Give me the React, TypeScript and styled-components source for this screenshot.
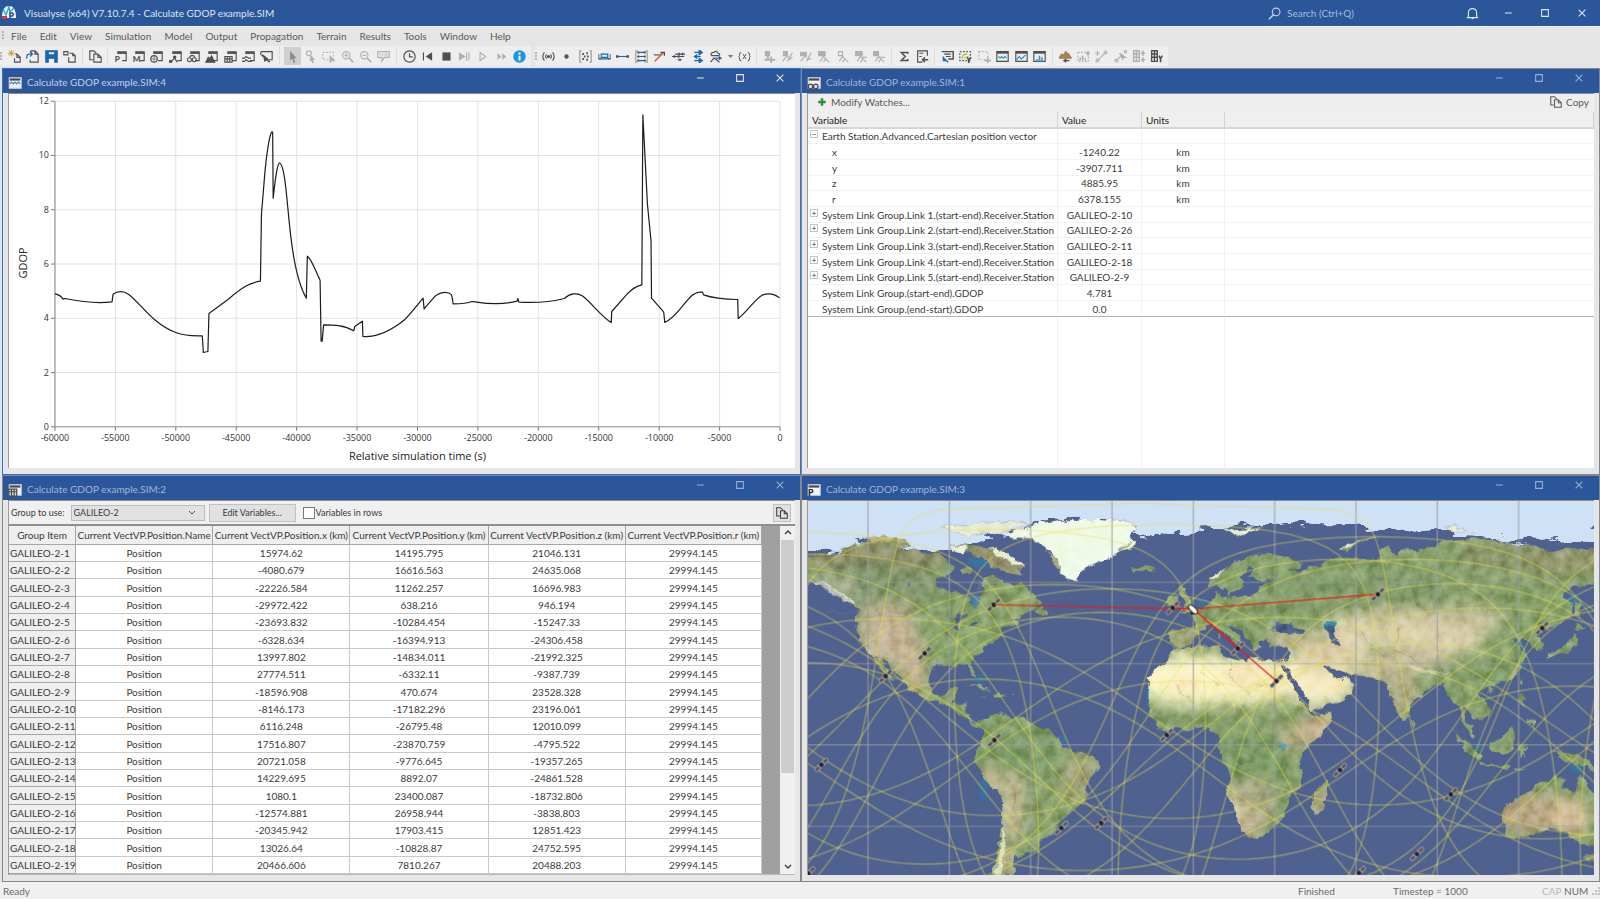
import React, { ReactNode } from 'react';
import styled, { createGlobalStyle, css } from 'styled-components';

const blue = '#2b579a';
const ink = '#505050';
const faded = '#b0b0b0';
const accent = '#1f66b0';

const Global = createGlobalStyle`
  * { box-sizing: border-box; }
  body { margin: 0; background: #e5e5e5; }
  button, select, input { font: inherit; color: inherit; }
`;

const Shell = styled.div`
  display: flex;
  flex-direction: column;
  height: 100vh;
  font: 10px/14px Lato, 'Open Sans', sans-serif;
  color: #3a3a3a;
`;

/* ---------- application frame ---------- */

const AppBar = styled.header`
  display: flex;
  align-items: center;
  flex: none;
  height: 26px;
  padding-left: 2px;
  background: ${blue};
  color: #dfe6f1;
`;

const AppTitle = styled.h1`
  margin: 0 auto 0 8px;
  font-size: 10px;
  font-weight: 400;
  line-height: 14px;
`;

const SearchBox = styled.label`
  display: flex;
  align-items: center;
  gap: 6px;
  width: 187px;
`;

const SearchInput = styled.input`
  width: 120px;
  padding: 0;
  border: 0;
  outline: 0;
  background: transparent;
  &::placeholder { color: #a9bbd8; opacity: 1; }
`;

const ControlButton = styled.button<{ $w: number; $dim?: boolean }>`
  display: grid;
  place-items: center;
  width: ${p => p.$w}px;
  height: 17px;
  padding: 0;
  border: 0;
  background: none;
  color: ${p => (p.$dim ? '#9aaed0' : '#dfe6f1')};
`;

const MenuBar = styled.nav`
  display: flex;
  align-items: center;
  gap: 13px;
  flex: none;
  height: 20px;
  padding: 0 0 2px 2px;
  border-top: 1px solid #f5f5f5;
  background: #e5e5e5;
`;

const MenuItem = styled.button`
  padding: 0;
  border: 0;
  background: none;
  color: #5a5a5a;
`;

const Grip = styled.span<{ $w: number }>`
  width: ${p => p.$w}px;
  height: 9px;
  flex: none;
  background: radial-gradient(circle at 1px 1px, #b4b4b4 1px, transparent 1px) 0 0 / 12px 3px repeat-y;
`;

const MenuGrip = styled(Grip)`
  margin-right: -8px;
`;

const Bars = styled.div`
  display: flex;
  gap: 4px;
  flex: none;
  height: 22px;
  background: #e5e5e5;
`;

const Bar = styled.div`
  display: flex;
  align-items: center;
  height: 20px;
  padding-right: 2px;
  background: #eee;
`;

const Group = styled.div<{ $w: number }>`
  display: grid;
  grid-auto-flow: column;
  grid-auto-columns: 1fr;
  justify-items: center;
  width: ${p => p.$w}px;
`;

const Separator = styled.span`
  width: 1px;
  height: 18px;
  margin: 0 3px;
  background: #dcdcdc;
`;

const ToolButton = styled.button<{ $on?: boolean; $off?: boolean }>`
  display: grid;
  place-items: center;
  width: ${p => (p.$on ? 17 : 18)}px;
  height: 18px;
  padding: 0;
  border: 0;
  background: ${p => (p.$on ? '#cfcfcf' : 'none')};
  color: ${p => (p.$on ? '#8c8c8c' : p.$off ? faded : ink)};
`;

/* ---------- child windows ---------- */

const Desktop = styled.main`
  display: grid;
  flex: 1;
  min-height: 0;
  grid-template: minmax(0, 1fr) minmax(0, 1fr) / minmax(0, 1fr) minmax(0, 1fr);
  padding-left: 2px;
`;

const Frame = styled.section<{ $active?: boolean }>`
  display: flex;
  flex-direction: column;
  min-height: 0;
  border: 1px solid ${p => (p.$active ? '#2a73cf' : '#84888e')};
  background: #e6e6e6;
`;

const FrameBar = styled.div`
  display: flex;
  align-items: center;
  height: 24px;
  flex: none;
  padding-left: 5px;
  background: ${blue};
`;

const FrameTitle = styled.h2<{ $active?: boolean }>`
  margin: 2px auto 0 5px;
  font-size: 10px;
  font-weight: 400;
  line-height: 14px;
  color: ${p => (p.$active ? '#c3d0e6' : '#a3b5d4')};
`;

const FrameIcon = styled.span`
  display: flex;
  margin-top: 3px;
  color: #4a4a4a;
`;

const FrameControls = styled.div`
  display: flex;
  align-self: flex-start;
`;

const FrameBody = styled.div`
  display: flex;
  flex: 1;
  flex-direction: column;
  min-height: 0;
  margin: 0 5px 6px;
  border-top: 1px solid #8d8d8d;
  border-left: 1px solid #9a9a9a;
  background: #fff;
`;

const Plot = styled.svg`
  display: block;
  width: 100%;
  height: 100%;
  min-height: 0;
`;

/* ---------- watch list ---------- */

const WatchBar = styled.div`
  display: flex;
  justify-content: space-between;
  flex: none;
  height: 18px;
  padding: 0 5px 2px 9px;
  background: #eee;
`;

const TextButton = styled.button`
  display: flex;
  align-items: center;
  gap: 4px;
  padding: 0;
  border: 0;
  background: none;
  color: #5a5a5a;
`;

const WatchTable = styled.table`
  flex: 1;
  width: 100%;
  height: 100%;
  min-height: 0;
  border-spacing: 0;
  table-layout: fixed;
  th, td { padding: 0; border-right: 1px solid #f0f0f0; }
  th {
    height: 17px;
    padding-left: 4px;
    border-right: 1px solid #d2d2d2;
    border-bottom: 2px solid #d6d6d6;
    background: #efefef;
    font-weight: 400;
    line-height: 14px;
    text-align: left;
    color: #222;
  }
  td:last-child { border-right: 0; }
`;

const WatchRow = styled.tr<{ $last?: boolean }>`
  height: 15px;
  &:nth-child(3n + 2), &:nth-child(3n) { height: 16px; }
  td { border-bottom: 1px solid ${p => (p.$last ? '#b4b4b4' : '#f2f2f2')}; text-align: center; line-height: 14px; }
  td:first-child { text-align: left; }
`;

const WatchName = styled.span<{ $child?: boolean }>`
  display: flex;
  align-items: center;
  gap: 4px;
  padding-left: ${p => (p.$child ? 24 : 2)}px;
`;

const Toggle = styled.button`
  width: 8px;
  height: 8px;
  margin-bottom: 4px;
  padding: 0;
  border: 1px solid #c4c4c4;
  background: #fff;
  font-size: 8px;
  line-height: 6px;
  color: #333;
`;

const ToggleGap = styled.span`
  width: 8px;
`;

/* ---------- group table ---------- */

const GroupBar = styled.form`
  display: flex;
  align-items: center;
  flex: none;
  height: 23px;
  padding: 0 4px 0 2px;
  background: #f0f0f0;
  font-size: 9px;
`;

const SelectWrap = styled.span`
  display: grid;
  grid-template-columns: 1fr 16px;
  align-items: center;
  width: 134px;
  height: 16px;
  margin: 0 4px 0 6px;
  border: 1px solid #bcbcbc;
  background: #e1e1e1;
`;

const Select = styled.select`
  grid-area: 1 / 1 / 2 / 3;
  height: 14px;
  padding: 0 0 0 2px;
  border: 0;
  appearance: none;
  background: none;
`;

const Chevron = styled.svg`
  grid-area: 1 / 2;
  pointer-events: none;
`;

const PushButton = styled.button<{ $w: number }>`
  display: grid;
  place-items: center;
  width: ${p => p.$w}px;
  height: 18px;
  padding: 0;
  border: 1px solid #c2c2c2;
  background: #e1e1e1;
`;

const CheckLabel = styled.label`
  display: flex;
  align-items: center;
  gap: 1px;
  margin: 0 auto 0 7px;
`;

const Check = styled.input`
  width: 12px;
  height: 12px;
  margin: 0;
  border: 1px solid #777;
  appearance: none;
  background: #fff;
`;

const Scroller = styled.div`
  display: grid;
  flex: 1;
  grid-template: minmax(0, 1fr) / minmax(0, 1fr) 15px;
  min-height: 0;
  overflow: hidden;
  border-top: 2px solid #8f8f8f;
  border-bottom: 1px solid #b9b9b9;
  background: #a0a0a0;
`;

const ScrollTrack = styled.div`
  display: flex;
  flex-direction: column;
  background: #f0f0f0;
`;

const ScrollThumb = styled.div`
  height: 67%;
  margin: 0 1px auto;
  background: #cdcdcd;
`;

const ScrollButton = styled.button`
  display: grid;
  place-items: center;
  height: 14px;
  padding: 0;
  border: 0;
  background: none;
  color: #444;
`;

const line = css`
  border-right: 1px solid #c8c8c8;
  border-bottom: 1px solid #c8c8c8;
`;

const DataTable = styled.table`
  width: calc(100% - 18px);
  border-spacing: 0;
  table-layout: fixed;
  align-self: start;
  th, td { padding: 0; font-weight: 400; line-height: 14px; text-align: center; white-space: nowrap; }
  td { background: #fff; ${line} }
  th { background: #efefef; border-right: 1px solid #a6a6a6; border-bottom: 1px solid #a6a6a6; }
  thead tr { height: 19px; }
  tbody tr { height: 17px; }
  tbody tr:nth-child(3n) { height: 18px; }
  tbody th { padding-left: 1px; text-align: left; }
`;

/* ---------- status bar ---------- */

const StatusBar = styled.footer`
  display: flex;
  align-items: center;
  flex: none;
  height: 17px;
  padding-left: 3px;
  background: #f0f0f0;
  color: #6a6a6a;
`;

const StatusCell = styled.span<{ $w?: number; $off?: boolean }>`
  width: ${p => (p.$w ? p.$w + 'px' : 'auto')};
  margin-right: ${p => (p.$w ? '0' : 'auto')};
  color: ${p => (p.$off ? '#b9b9b9' : 'inherit')};
`;

/* ---------- icons ---------- */

const Svg = ({ size = 13, children }: { size?: number; children: ReactNode }) => (
  <svg width={size} height={size} viewBox="0 0 16 16" fill="none" stroke="currentColor" strokeWidth="1.4" aria-hidden="true">
    {children}
  </svg>
);

const pane = (
  <>
    <path d="M4 4h11v9h-5" />
    <path d="M4 3h11.700" strokeWidth="3" />
  </>
);
const dish = <path d="M4 14l4-6 3 3 4 4M11 11l-3 4" />;

const glyphs: Record<string, ReactNode> = {
  New: <><path d="M9 5h2l4 4v6H8v-5" /><path d="M11 5v4h4" /><path d="M4 0v8M0 4h8M1 1l6 6M7 1L1 7" stroke="#d39433" strokeWidth="1.100" /></>,
  Open: <><path d="M6 4V1h5l4 4v10H5v-3M11 1v4h4" /><path d="M1 11V8q0-3 3-3h3M5 2l3 3-3 3" stroke={accent} /></>,
  Save: <path d="M1 1h14v14h-3v-5H4v5H1zM4 2v4h8V2z" fill={accent} stroke={accent} fillRule="evenodd" />,
  'Save as': <><path d="M1 2h5v4H1zM8 4h4l3 3v8H7V9" /><path d="M12 4v3h3" /></>,
  Copy: <><path d="M5 12H1V1h5l3 3" /><path d="M6 5h5l4 4v6H6zM11 5v4h4" /></>,
  Plan: <>{pane}<text x="1" y="15" fontSize="10" fontWeight="900" fill="currentColor" stroke="none">P</text></>,
  Mercator: <>{pane}<text x="1" y="15" fontSize="10" fontWeight="900" fill="currentColor" stroke="none">M</text></>,
  Globe: <>{pane}<circle cx="5" cy="11" r="4" /><path d="M1 11h8M5 7v8" strokeWidth="0.800" /></>,
  Network: <>{pane}<path d="M2 15l5-5 3 5M7 7v3" /><circle cx="2" cy="14" r="1.400" fill="currentColor" /><circle cx="7" cy="9" r="1.400" fill="currentColor" /></>,
  Watch: <>{pane}<circle cx="3" cy="12" r="2.400" /><circle cx="9" cy="12" r="2.400" /><path d="M3 9l2-2h3l2 2" /></>,
  Terrain: <>{pane}<path d="M1 15l3-6 2 2 2-4 4 8z" fill="currentColor" /></>,
  Table: <>{pane}<path d="M1 8h9v7H1zM1 11h9M4 8v7M7 8v7" /></>,
  Wave: <>{pane}<path d="M0 10h3l2-2 3 2h3M0 14h3l2-2 3 2h4" /></>,
  Tools: <><path d="M1 2h14v10h-4M1 6V2" /><path d="M2 6l10 9M5 8l4 3-3 2z" strokeWidth="2" /></>,
  Select: <path d="M5 1l8 9H9.500l2 5-2 1-2-5.500L5 13z" fill="currentColor" stroke="none" />,
  Pick: <><path d="M8 6l6 6h-3l1 4h-2l-1-3-2 1z" fill="currentColor" stroke="none" /><circle cx="6" cy="4" r="3" /></>,
  Area: <><path d="M1 3h13v9H1z" strokeDasharray="2 2" /><path d="M10 8l5 5h-3l-2 2z" fill="currentColor" /></>,
  'Zoom in': <><circle cx="6.500" cy="6.500" r="4.500" /><path d="M10 10l5 5" strokeWidth="2" /><path d="M4 6.500h5M6.500 4v5" /></>,
  'Zoom out': <><circle cx="6.500" cy="6.500" r="4.500" /><path d="M10 10l5 5" strokeWidth="2" /><path d="M4 6.500h5" /></>,
  Note: <><path d="M1 2h14v7H9l-3 5V9H1z" /><path d="M4 4v3M7 4v3M10 4v3M12 4v3" strokeWidth="1" /></>,
  Clock: <><circle cx="8" cy="8" r="7" /><path d="M8 4v4.500h4" /></>,
  Restart: <path d="M3 3v10M13 4L7 8l6 4z" fill="currentColor" />,
  Stop: <path d="M3 3h10v10H3z" fill="currentColor" stroke="none" />,
  Step: <path d="M2 4l6 4-6 4zM10.500 3v10M13.500 3v10" fill="currentColor" />,
  Play: <path d="M5 3l7 5-7 5z" />,
  Fast: <path d="M3 4l5 4-5 4zM9 4l5 4-5 4z" fill="currentColor" stroke="none" />,
  Information: <><circle cx="8" cy="8" r="7.700" fill="#1c97dd" stroke="none" /><path d="M8 7v6M8 3v2.400" stroke="#fff" strokeWidth="2.400" /></>,
  Signal: <><circle cx="8" cy="8" r="1.200" fill="currentColor" /><path d="M5.500 5.500q-2 2.500 0 5M10.500 5.500q2 2.500 0 5M3 3q-4 5 0 10M13 3q4 5 0 10" /></>,
  Point: <circle cx="8" cy="8" r="2" fill="currentColor" />,
  Cluster: <><path d="M3 1H1v14h2M13 1h2v14h-2" stroke="#9a9a9a" /><path d="M4 5h2M9 4h2M6 8h2M10 8h2M4 11h2M9 12h2" strokeWidth="2.400" /></>,
  Antenna: <><path d="M1 5v6h3M15 5v6h-3" stroke="#777" /><path d="M4 5h8v4H4zM1 11h14" stroke={accent} /></>,
  Link: <><path d="M2 8h12" stroke={accent} /><path d="M0 8h3M13 8h3" strokeWidth="3" /></>,
  'Link group': <><path d="M3 1H1v14h2M13 1h2v14h-2" stroke="#9a9a9a" /><path d="M3 3h10M3 8h10M3 13h10" stroke={accent} /><path d="M3 3h2M11 3h2M3 8h2M11 8h2M3 13h2M11 13h2" strokeWidth="2.600" /></>,
  Interference: <><path d="M1 6h8" /><path d="M2 14l10-10" stroke="#e0452b" strokeWidth="1.700" /><path d="M9 3h5v4" strokeWidth="1.700" /></>,
  Paths: <><path d="M0 8h15M4 5h12M7 12h5" strokeWidth="1.400" /><path d="M2 8h2M8 5h2M7 8h2M12 5h2" strokeWidth="3.200" /><path d="M8 12h3" stroke={accent} strokeWidth="2.500" /></>,
  Flow: <path d="M4 3h6M10 0l4 3-4 3zM4 13h6M10 10l4 3-4 3zM12 8H6M7 6L4 8l3 2z" stroke={accent} fill={accent} />,
  Traffic: <><path d="M3 7q-2-4 3-4 3-3 5 1 4 1 1 3zM2 15l4-5 3 2 4 3" /><path d="M8 10h6M12 8l3 2-3 2" stroke={accent} /></>,
  Variable: <><path d="M4 3q-2 0-2 2t-1 3q1 0 1 3t2 2M12 3q2 0 2 2t1 3q-1 0-1 3t-2 2" strokeWidth="1.200" /><path d="M6 5l4 6M10 5l-4 6" strokeWidth="1.200" /></>,
  'Add link': <><path d="M3 2h5v5H3z" fill="currentColor" /><path d="M6 7v5M2 12h13M10 8v8" strokeWidth="2.200" /></>,
  'Split A': <><path d="M3 2h5v5H3z" fill="currentColor" /><path d="M2 14l5-6 3 1M8 14l6-11M10 12l4-3" /></>,
  'Split B': <><path d="M2 3h7v4H2z" fill="currentColor" /><path d="M2 14l5-6 3 1M9 14l6-11M11 12l4-2" /></>,
  'Station A': <><path d="M2 2h8v5H2z" fill="currentColor" />{dish}</>,
  'Station B': <><path d="M3 2h5v5H3z" />{dish}</>,
  'Station C': <><path d="M2 2h8v5H2z" fill="currentColor" />{dish}<path d="M10 9h6" /></>,
  'Station D': <><path d="M2 2h6v5H2z" fill="currentColor" />{dish}<path d="M8 9h8" /></>,
  Sum: <path d="M12 5V3H4l5 5-5 5h8v-2" strokeWidth="1.800" />,
  Export: <><path d="M14 7V1H2v14h6M4 4h5M4 8h3" /><path d="M15 12H9M11 9l-3 3 3 3" strokeWidth="1.800" /></>,
  Report: <><path d="M1 2h14v9H9" strokeWidth="1.800" /><path d="M4 5h8M6 8h6" /><path d="M3 10l6 5M3 8v5h4" stroke={accent} strokeWidth="1.800" /></>,
  Contours: <><path d="M1 2h13v11H1z" strokeDasharray="2 2" /><path d="M4 11q-1-6 6-6" stroke="#8fbf4c" /><path d="M7 12q-1-4 5-4" stroke="#e8c92e" /><path d="M10 9l2 3 3-3M12 12v4" strokeWidth="2" /></>,
  'Add area': <><path d="M1 2h11v10H1z" strokeDasharray="2 2" /><path d="M8 13h8M12 9v7" strokeWidth="2" /></>,
  Spectrum: <><path d="M1 2h14v12H1z" /><path d="M1 3h14" strokeWidth="3" /><path d="M3 8l2 2 2-2 2 2 2-2 2 2" stroke="#3496d0" /></>,
  Line: <><path d="M1 2h14v12H1z" /><path d="M1 3h14" strokeWidth="3" /><path d="M2 12l3-4 3 3 5-5" stroke="#1d86cc" /></>,
  Histogram: <><path d="M1 2h14v12H1z" /><path d="M1 3h14" strokeWidth="3" /><path d="M5 14v-3M8 14V7M11 14v-5" stroke="#3496d0" strokeWidth="2" /></>,
  'Terrain data': <><path d="M0 10l3-5 3 1 2-4 4 3 3 5z" fill="#a38254" stroke="#a38254" /><path d="M7 13h6M9 11l-3 2 3 2" strokeWidth="1.600" /></>,
  Profile: <><path d="M1 3h10M1 3v11h13V8" strokeDasharray="2 2" /><path d="M4 13V9M7 13V7M10 13v-3M11 4h5M13.500 1v6" strokeWidth="2" /></>,
  'Add path': <><path d="M3 13L13 3M0 4h6M3 1v6" /><circle cx="3" cy="13" r="1.800" /><circle cx="13" cy="3" r="1.800" /></>,
  'Edit path': <><path d="M3 13l6-6" /><circle cx="3" cy="13" r="1.800" /><circle cx="14" cy="2" r="1.500" /><path d="M7 4l7 5h-3v3z" fill="currentColor" /></>,
  'Add clutter': <><path d="M2 1h7v13H2zM2 5h7M2 9h7M5.500 1v13" strokeWidth="1.700" /><path d="M11 4h5M13.500 1v6M11 12h5M13.500 9v6" strokeWidth="2" /></>,
  Clutter: <><path d="M2 1h7v13H2zM2 5h7M2 9h7M5.500 1v13" strokeWidth="1.700" /><path d="M11 7l2 4 2-4M13 10v5" strokeWidth="2" /></>,
};

const Tool = ({ name, on, off }: { name: string; on?: boolean; off?: boolean }) => (
  <ToolButton type="button" aria-label={name} $on={on} $off={off}>
    <Svg>{glyphs[name]}</Svg>
  </ToolButton>
);

const Tools = ({ w, names, off = [] }: { w: number; names: string[]; off?: string[] }) => (
  <Group $w={w}>
    {names.map(n => <Tool key={n} name={n} on={n === 'Select'} off={off.includes(n)} />)}
  </Group>
);

const Controls = ({ w, dim }: { w: number; dim?: boolean }) => (
  <>
    <ControlButton type="button" aria-label="Minimise" $w={w} $dim={dim}><Svg size={12}><path d="M4 8h9" /></Svg></ControlButton>
    <ControlButton type="button" aria-label="Maximise" $w={w} $dim={dim}><Svg size={12}><path d="M3.500 3.500h9v9h-9z" /></Svg></ControlButton>
    <ControlButton type="button" aria-label="Close" $w={w} $dim={dim}><Svg size={12}><path d="M3.500 3.500l9 9M12.500 3.500l-9 9" /></Svg></ControlButton>
  </>
);

const titleGlyphs: Record<string, ReactNode> = {
  chart: <path d="M2 9l2-2 2 2 2-2 2 2 2-2 2 2" stroke="#2c8bc9" />,
  watch: <><circle cx="4" cy="12" r="2.600" fill="#ddd" /><circle cx="10" cy="12" r="2.600" fill="#ddd" /></>,
  table: <><path d="M1 7h9v8H1z" fill="#ddd" /><path d="M1 10h9M4 7v8M7 7v8" /></>,
  map: <text x="1" y="15" fontSize="10" fontWeight="900" fill="#222" stroke="none">P</text>,
};

const ChildWindow = ({ n, icon, active, children }: { n: number; icon: string; active?: boolean; children: ReactNode }) => (
  <Frame $active={active} aria-label={`Calculate GDOP example.SIM:${n}`}>
    <FrameBar>
      <FrameIcon>
        <Svg size={14}>
          <path d="M1.500 2h13.500v12H1.500z" fill="#f2f2f2" stroke="#d8d8d8" />
          <path d="M2 4h12" strokeWidth="2.500" />
          {titleGlyphs[icon]}
        </Svg>
      </FrameIcon>
      <FrameTitle $active={active}>Calculate GDOP example.SIM:{n}</FrameTitle>
      <FrameControls><Controls w={40} dim={!active} /></FrameControls>
    </FrameBar>
    <FrameBody>{children}</FrameBody>
  </Frame>
);

/* ---------- GDOP chart ---------- */

const gdopCurve =
  'M0 578C8 580 12 584 16 594L20 592C42 599 82 608 112 602L114 579C122 569 135 569 144 579C167 604 192 669 237 694C257 706 277 704 289 704L291 754L300 751L302 637L340 594C367 559 382 544 403 540L405 339L412 209C418 119 424 84 427 93L428 291C433 219 437 184 441 185C452 197 455 309 462 399C468 479 477 549 493 591L495 465C504 474 512 514 520 537L522 720L524 720L527 671C547 671 567 671 586 689L588 676L603 660L604 706C637 709 667 679 687 654C702 629 712 609 722 591L724 623L742 591C752 572 770 569 778 581L781 608C797 608 810 606 818 601L824 602C852 609 882 610 906 600L908 592L910 603C937 605 972 603 999 592C1010 576 1024 574 1034 584C1052 604 1070 644 1091 664L1092 631L1122 579C1132 562 1142 554 1151 551L1153 41L1162 309L1169 419L1170 591L1192 629L1194 634L1196 664C1217 649 1232 609 1247 586C1254 576 1264 572 1270 573L1272 581C1287 589 1307 594 1339 595L1340 652C1357 634 1372 594 1387 582C1400 574 1412 579 1421 590';

const px = 46;
const py = 7;
const pw = 726;
const ph = 326;

const Chart = () => (
  <Plot viewBox="0 0 787 374" fontFamily="Open Sans, sans-serif" role="img" aria-label="GDOP against relative simulation time">
    {Array.from({ length: 13 }, (_, i) => {
      const x = px + (pw * i) / 12;
      return (
        <g key={i}>
          <path d={`M${x} ${py}V${py + ph}`} stroke="#e2e2e2" />
          <path d={`M${x} ${py + ph}v4`} stroke="#777" />
          <text x={x} y={py + ph + 14} fontSize="9" textAnchor="middle" fill="#333">{-60000 + 5000 * i}</text>
        </g>
      );
    })}
    {Array.from({ length: 7 }, (_, i) => {
      const y = py + (ph * (6 - i)) / 6;
      return (
        <g key={i}>
          <path d={`M${px} ${y}h${pw}`} stroke={i ? '#e2e2e2' : '#888'} />
          <path d={`M${px - 4} ${y}h4`} stroke="#777" />
          <text x={px - 6} y={y + 3} fontSize="9" textAnchor="end" fill="#333">{2 * i}</text>
        </g>
      );
    })}
    <path d={`M${px} ${py}v${ph}`} stroke="#888" />
    <g transform={`translate(${px} ${py}) scale(${pw / 1422} ${ph / 977})`}>
      <path d={gdopCurve} fill="none" stroke="#1c1c1c" strokeWidth="1.200" strokeLinejoin="round" vectorEffect="non-scaling-stroke" />
    </g>
    <text x={px + pw / 2} y="366" fontSize="11" textAnchor="middle" fill="#222">Relative simulation time (s)</text>
    <text transform="translate(18 169) rotate(-90)" fontSize="11" textAnchor="middle" fill="#222">GDOP</text>
  </Plot>
);

/* ---------- watches ---------- */

type WatchEntry = { name: string; value?: string; units?: string; kind?: 'open' | 'closed' | 'child' };

const linkGroup = 'System Link Group.';
const watches: WatchEntry[] = [
  { name: 'Earth Station.Advanced.Cartesian position vector', kind: 'open' },
  { name: 'x', value: '-1240.22', units: 'km', kind: 'child' },
  { name: 'y', value: '-3907.711', units: 'km', kind: 'child' },
  { name: 'z', value: '4885.95', units: 'km', kind: 'child' },
  { name: 'r', value: '6378.155', units: 'km', kind: 'child' },
  ...[10, 26, 11, 18, 9].map((s, i): WatchEntry => ({
    name: `${linkGroup}Link ${i + 1}.(start-end).Receiver.Station`,
    value: `GALILEO-2-${s}`,
    kind: 'closed',
  })),
  { name: `${linkGroup}(start-end).GDOP`, value: '4.781' },
  { name: `${linkGroup}(end-start).GDOP`, value: '0.0' },
];

const CopyIcon = () => <Svg size={12}>{glyphs.Copy}</Svg>;

const Watches = () => (
  <>
    <WatchBar>
      <TextButton type="button">
        <Svg size={10}><path d="M8 2v12M2 8h12" stroke="#2f8f35" strokeWidth="4" /></Svg>
        Modify Watches...
      </TextButton>
      <TextButton type="button"><CopyIcon />Copy</TextButton>
    </WatchBar>
    <WatchTable>
      <colgroup><col width="250" /><col width="84" /><col width="83" /><col /></colgroup>
      <thead><tr><th>Variable</th><th>Value</th><th>Units</th><th aria-label="Spare" /></tr></thead>
      <tbody>
        {watches.map((w, i) => (
          <WatchRow key={w.name} $last={i === watches.length - 1}>
            <td>
              <WatchName $child={w.kind === 'child'}>
                {w.kind === 'open' && <Toggle type="button" aria-label="Collapse">−</Toggle>}
                {w.kind === 'closed' && <Toggle type="button" aria-label="Expand">+</Toggle>}
                {!w.kind && <ToggleGap />}
                {w.name}
              </WatchName>
            </td>
            <td>{w.value}</td>
            <td>{w.units}</td>
            <td />
          </WatchRow>
        ))}
        <tr><td /><td /><td /><td /></tr>
      </tbody>
    </WatchTable>
  </>
);

/* ---------- group table ---------- */

const positions: [string, string, string][] = [
  ['15974.62', '14195.795', '21046.131'],
  ['-4080.679', '16616.563', '24635.068'],
  ['-22226.584', '11262.257', '16696.983'],
  ['-29972.422', '638.216', '946.194'],
  ['-23693.832', '-10284.454', '-15247.33'],
  ['-6328.634', '-16394.913', '-24306.458'],
  ['13997.802', '-14834.011', '-21992.325'],
  ['27774.511', '-6332.11', '-9387.739'],
  ['-18596.908', '470.674', '23528.328'],
  ['-8146.173', '-17182.296', '23196.061'],
  ['6116.248', '-26795.48', '12010.099'],
  ['17516.807', '-23870.759', '-4795.522'],
  ['20721.058', '-9776.645', '-19357.265'],
  ['14229.695', '8892.07', '-24861.528'],
  ['1080.1', '23400.087', '-18732.806'],
  ['-12574.881', '26958.944', '-3838.803'],
  ['-20345.942', '17903.415', '12851.423'],
  ['13026.64', '-10828.87', '24752.595'],
  ['20466.606', '7810.267', '20488.203'],
];

const GroupTable = () => (
  <>
    <GroupBar>
      <label htmlFor="group">Group to use:</label>
      <SelectWrap>
        <Select id="group" defaultValue="GALILEO-2"><option>GALILEO-2</option></Select>
        <Chevron width="8" height="8" viewBox="0 0 8 8" fill="none" stroke="#555"><path d="M1 2l3 3 3-3" /></Chevron>
      </SelectWrap>
      <PushButton type="button" $w={87}>Edit Variables...</PushButton>
      <CheckLabel><Check type="checkbox" />Variables in rows</CheckLabel>
      <PushButton type="button" aria-label="Copy table" $w={18}><CopyIcon /></PushButton>
    </GroupBar>
    <Scroller>
      <DataTable>
        <colgroup><col width="67" /><col width="137" /><col width="137" /><col width="138" /><col width="137" /><col width="136" /></colgroup>
        <thead>
          <tr>
            <th>Group Item</th>
            <th>Current VectVP.Position.Name</th>
            {['x', 'y', 'z', 'r'].map(a => <th key={a}>Current VectVP.Position.{a} (km)</th>)}
          </tr>
        </thead>
        <tbody>
          {positions.map((p, i) => (
            <tr key={i}>
              <th scope="row">GALILEO-2-{i + 1}</th>
              <td>Position</td>
              {p.map((v, k) => <td key={k}>{v}</td>)}
              <td>29994.145</td>
            </tr>
          ))}
        </tbody>
      </DataTable>
      <ScrollTrack>
        <ScrollButton type="button" aria-label="Scroll up"><svg width="8" height="8" viewBox="0 0 8 8" fill="none" stroke="currentColor" strokeWidth="1.500"><path d="M1 5l3-3 3 3" /></svg></ScrollButton>
        <ScrollThumb />
        <ScrollButton type="button" aria-label="Scroll down"><svg width="8" height="8" viewBox="0 0 8 8" fill="none" stroke="currentColor" strokeWidth="1.500"><path d="M1 2l3 3 3-3" /></svg></ScrollButton>
      </ScrollTrack>
    </Scroller>
  </>
);

/* ---------- world map ---------- */

/* Satellites as [longitude, latitude] in degrees. */
const satellites: [number, number][] = [
  [149.4, 44.6], [-148.4, 55.2], [-99.1, 33.8], [-73.4, 1.8], [-48.7, -30.6], [-3.3, -54.1], [61.1, -47.2],
  [95, -18.2], [-73.6, 51.7], [-7.6, 50.6], [30.7, 23.6], [54.1, -9.2], [82.5, -40.2], [139.8, -56],
  [-164.8, -38.6], [-137.2, -7.3], [-113.5, 25.4], [68.1, 55.6], [128.7, 43.1], [159.4, 13.2], [-178, -20.1],
  [-142, -47.4], [-77.5, -53.4], [-34, -28.8], [-9.8, 3.7], [16.4, 35.6],
];

const mapX = (lon: number) => 3 * (393.3 + 2.711 * lon);
const mapY = (lat: number) => 3 * (275 - 2.711 * lat);
const rad = Math.PI / 180;

/* Horizon circle of a satellite, traced as a path and broken where it wraps. */
const footprint = ([lon0, lat0]: [number, number]) => {
  const rho = Math.acos(6378.155 / 29994.145);
  let d = '';
  let prev = 999;
  for (let b = 0; b <= 360; b += 3) {
    const sinLat = Math.sin(lat0 * rad) * Math.cos(rho) + Math.cos(lat0 * rad) * Math.sin(rho) * Math.cos(b * rad);
    const dLon = Math.atan2(Math.sin(b * rad) * Math.sin(rho) * Math.cos(lat0 * rad), Math.cos(rho) - Math.sin(lat0 * rad) * sinLat) / rad;
    const lon = ((lon0 + dLon + 540) % 360) - 180;
    d += `${Math.abs(lon - prev) > 180 ? 'M' : 'L'}${mapX(lon).toFixed(1)} ${mapY(Math.asin(sinLat) / rad).toFixed(1)}`;
    prev = lon;
  }
  return d;
};

const west = {
  america: 'M0 258L75 254 105 262 130 240 165 224 230 222 300 235 350 240 380 250 410 245 430 262 445 280 470 290 440 310 412 330 412 345 430 362 460 368 490 372 510 380 515 400 530 408 540 395 536 375 555 362 548 345 548 325 575 316 610 330 640 345 660 338 685 362 705 385 727 398 715 415 690 425 660 438 625 455 655 450 660 468 625 468 600 480 612 492 580 510 560 530 545 548 525 562 512 578 525 600 528 620 515 612 503 586 480 582 440 590 410 588 390 605 385 640 395 668 415 678 440 674 450 655 474 652 465 680 455 697 500 700 500 740 525 760 548 752 560 745 575 738 600 728 630 740 660 740 690 755 720 772 745 780 775 805 790 830 820 848 860 850 893 868 895 895 862 935 862 970 850 1000 820 1015 788 1045 770 1080 745 1100 718 1112 718 1130 700 1145 665 1156 640 1160 632 1185 648 1196 640 1216 578 1216 585 1170 595 1130 602 1080 607 1030 606 985 590 960 560 940 545 905 522 872 526 845 545 820 553 795 548 772 525 768 505 755 480 735 455 715 420 700 385 690 340 665 312 640 280 600 262 575 248 572 255 592 272 612 288 635 275 628 245 600 225 565 195 540 175 505 170 470 172 430 180 420 150 400 125 375 100 355 60 340 0 322z',
  islands: 'M470 222L520 225 570 235 600 250 640 272 678 286 655 300 665 316 620 306 575 290 545 262 500 248zM480 295L510 290 520 310 490 312zM702 425L730 405 745 430 730 440zM150 232L200 215 250 205 320 212 340 225 280 235 230 232zM495 638L540 645 575 662 540 655zM578 670L600 665 622 678 590 680zM545 676l14 2-10 3zM635 675l14 2-12 3z',
  european: 'M1140 345L1160 352 1155 370 1172 385 1180 405 1200 420 1145 428 1158 412 1150 395 1135 370zM1100 392L1118 374 1130 380 1126 405 1104 412zM985 290L1005 296 1060 288 1070 295 1045 308 1005 306z',
};

const east = {
  africa: 'M-50 535L0 530 60 525 65 548 110 568 135 578 150 560 195 568 240 574 262 570 258 590 245 585 262 620 282 655 305 692 325 715 340 738 396 730 390 758 365 792 330 825 305 850 300 880 308 920 300 950 270 970 265 1010 245 1040 215 1080 190 1100 140 1105 130 1085 110 1050 98 1000 80 970 92 920 75 870 55 830 60 800 38 792 18 768-30 782-65 775-95 792-130 765-150 735-158 700-150 640-158 630-135 600-105 575-90 550-75 530z',
  eurasia: 'M248 580L262 570 272 545 268 528 230 532 205 530 198 505 215 492 230 478 240 450 285 458 322 484 300 490 250 490 200 502 178 520 185 535 165 540 150 515 130 490 100 462 88 466 118 500 122 512 105 520 80 495 52 475 30 465 0 480-8 505-30 528-62 530-92 518-92 478-15 476-18 450-35 432-15 418 20 405 45 385 50 360 60 375 95 385 150 378 180 365 185 345 222 330 165 333 152 322 170 298 145 292 122 322 130 345 110 362 85 374 70 352 25 348 28 325 80 300 110 275 150 258 200 248 250 260 310 278 295 295 255 295 300 302 330 292 380 275 430 262 480 268 538 262 545 240 565 230 585 262 612 235 650 240 690 230 720 218 780 210 850 200 920 222 1000 228 1050 243 1100 238 1200 236 1200 342 1115 348 1085 378 1122 400 1115 430 1080 462 1030 482 1012 500 1028 518 1030 540 1008 542 985 512 968 500 940 516 958 528 975 560 968 592 935 622 900 645 862 650 838 662 862 700 868 735 835 752 815 735 790 712 795 745 818 775 826 805 805 790 782 745 780 710 755 695 742 668 725 642 700 650 665 672 632 706 630 735 612 758 590 720 572 680 562 648 545 636 522 620 455 616 440 605 415 608 385 585 373 590 398 620 412 630 425 630 440 618 467 645 430 692 380 708 336 722 325 692 300 652 275 616z',
  australia: 'M905 1010L960 985 1010 942 1060 920 1092 930 1088 950 1125 970 1140 912 1162 950 1200 990 1200 1130 1130 1122 1100 1090 1060 1075 1010 1090 940 1108 920 1100 908 1040z',
  islands: 'M382 928L386 950 365 1022 345 1032 334 1010 342 968 358 955zM1132 488L1130 528 1098 548 1045 562 1045 552 1092 532 1118 505zM1122 458L1156 470 1130 482zM1126 378L1142 402 1136 442 1124 428zM755 780L800 818 848 860 836 874 790 830zM835 878L930 888 925 900 840 886zM868 822L900 810 932 768 948 790 935 845 905 855 875 846zM955 822L985 822 965 840 980 865 965 850 955 868zM1060 842L1100 845 1160 866 1190 890 1190 905 1140 888 1090 870zM962 675L975 680 970 700 985 715 965 705zM985 745L1005 755 1000 775 982 760zM632 748L645 765 638 775zM868 650L885 655 870 672zM958 640L968 622 966 645zM415 242L440 220 480 208 540 198 482 218 440 244zM1150 1165L1190 1152 1190 1178zM50 495l8-5 0 18-8 0zM935 900l25-4 30 4-50 4zM80 372l14-6-2 16z',
};

const Land = ({ fill }: { fill: string }) => (
  <>
    <path d={west.america + west.islands + west.european} fill={fill} />
    <path transform="translate(1200 0)" d={east.africa} fill={fill} />
    <path transform="translate(1200 0)" d={east.eurasia + east.australia + east.islands} fill={fill} />
  </>
);

/* Terrain tints: centre x, centre y, radius x, radius y, colour. */
type Tint = [number, number, number, number, string];

const greens: Tint[] = [
  [1350, 890, 110, 90, '#7a9a64'], [650, 860, 130, 80, '#7b9b66'], [480, 520, 90, 60, '#86a26c'], [2080, 600, 90, 50, '#829e69'], [1700, 350, 260, 40, '#7f9a68'],
];

const tints: Tint[] = [
  [200, 255, 260, 40, '#8f8d68'], [240, 340, 200, 60, '#80946a'], [600, 265, 120, 50, '#94906a'],
  [290, 425, 60, 30, '#aca884'], [240, 490, 70, 90, '#c0b294'], [300, 520, 60, 70, '#c6b598'], [340, 610, 40, 60, '#c2b08f'],
  [100, 350, 80, 14, '#c9c9ad'], [640, 1010, 26, 110, '#d2c09f'], [570, 930, 26, 50, '#c9b794'], [615, 1180, 30, 50, '#bdb090'],
  [830, 930, 50, 70, '#9da073'], [850, 890, 40, 40, '#a8a580'],
  [1150, 500, 50, 30, '#aaa77c'], [1180, 630, 170, 78, '#fbf6c8'], [1330, 630, 190, 74, '#fbf4c4'], [1400, 620, 120, 64, '#f6edbf'],
  [1320, 620, 60, 26, '#f6e0b4'], [1150, 645, 40, 20, '#f6e0b4'],
  [1560, 620, 110, 90, '#f6ecc2'], [1560, 780, 50, 50, '#cbb092'], [1480, 800, 40, 40, '#b6ab86'], [1350, 1000, 80, 80, '#a9a882'], [1330, 1060, 50, 50, '#c2b591'], [1290, 1010, 20, 60, '#dccfaa'],
  [1560, 980, 24, 60, '#a8a680'],
  [1480, 510, 90, 24, '#c9bb95'], [1600, 560, 110, 50, '#dacca5'], [1680, 480, 110, 50, '#ddd3b0'], [1750, 590, 60, 40, '#d3c6a0'],
  [1820, 440, 160, 30, '#c3bc95'], [1900, 500, 150, 60, '#ddd1ac'], [1990, 450, 120, 40, '#cbc29e'], [1860, 560, 90, 40, '#c8c0a0'],
  [1810, 670, 50, 70, '#b0ad84'], [1800, 610, 60, 30, '#b5b088'], [2300, 270, 160, 50, '#93966c'], [2080, 250, 120, 40, '#8e976c'],
  [2200, 1030, 110, 60, '#b8a583'], [2310, 1040, 60, 60, '#d3bc98'], [2120, 1020, 40, 40, '#b4a27e'], [1540, 1000, 30, 60, '#a8a47a'],
];

const shoals: [number, number, number, number][] = [
  [545, 275, 45, 16], [540, 628, 22, 12], [785, 810, 18, 10], [2165, 560, 12, 36], [2150, 510, 18, 9], [2035, 830, 10, 14],
  [2330, 895, 22, 14], [2320, 390, 22, 12], [1205, 400, 18, 10], [1048, 680, 7, 36], [552, 950, 10, 44],
];

const iceWest = 'M0 93H1210V180L1170 188 1120 190 1080 186 1040 196 1010 190 990 160 800 150 680 158 620 190 560 200 520 225 450 240 400 255 350 240 230 205 160 228 140 242 0 243z';
const iceEast = 'M0 93H1190V215L1150 212 1110 222 1080 210 1040 212 1000 205 960 218 915 218 900 205 840 200 780 198 720 172 690 172 660 190 610 182 540 176 500 180 450 165 360 166 300 156 200 165 120 168 60 176 0 180z';
const greenland = 'M600 195L640 183 720 160 800 150 900 146 990 155 1012 175 992 200 1012 222 962 250 912 270 870 290 848 300 835 322 825 335 800 326 782 310 770 290 768 262 745 240 722 215 690 205 640 202z';
const borders = 'M24 428H175L420 430 470 450M24 255V330M200 545L260 550 330 610M470 870L500 850M560 870L620 860 640 900 700 960 720 1000M600 960L640 960 650 1040 700 1110';
const bordersEast = 'M95 545L90 620 160 680M240 640H170M225 700L225 790 300 800M90 720L120 690M100 880H190L230 830M225 580V640M60 420L80 450 150 480M200 300L210 380 180 420M360 440L420 405 560 400 620 390 700 420 800 410 860 420 940 410 960 440M600 470L580 540 700 600 760 600M480 480L520 540 560 560M110 985L160 990 200 950M-80 640L-20 700M0 600L60 650';

const Satellite = ({ x, y }: { x: number; y: number }) => (
  <g transform={`translate(${x} ${y}) rotate(-45)`}>
    <rect x="-27" y="-7" width="54" height="14" rx="6" fill="#bdb7b8" opacity="0.8" />
    <rect x="-24" y="-4.500" width="14" height="9" fill="#5d5652" />
    <rect x="10" y="-4.500" width="14" height="9" fill="#5d5652" />
    <circle r="7" fill="#262322" />
  </g>
);

const WorldMap = () => (
  <Plot viewBox="24 93 2358 1122" preserveAspectRatio="xMidYMid slice" role="img" aria-label="World map with satellite positions">
    <defs>
      <filter id="coast" x="0" y="93" width="2400" height="1130" filterUnits="userSpaceOnUse" colorInterpolationFilters="sRGB">
        <feTurbulence type="fractalNoise" baseFrequency="0.035" numOctaves="3" seed="4" result="n" />
        <feDisplacementMap in="SourceGraphic" in2="n" scale="24" xChannelSelector="R" yChannelSelector="G" result="s" />
        <feTurbulence type="fractalNoise" baseFrequency="0.03" numOctaves="5" seed="9" />
        <feColorMatrix values="0.700 0 0 0 0.170  0.700 0 0 0 0.170  0.700 0 0 0 0.170  0 0 0 0 1" result="g" />
        <feBlend in="g" in2="s" mode="soft-light" result="b" />
        <feComposite in="b" in2="s" operator="in" />
      </filter>
      <filter id="ragged" x="0" y="60" width="2400" height="400" filterUnits="userSpaceOnUse">
        <feTurbulence type="fractalNoise" baseFrequency="0.02 0.05" numOctaves="4" seed="2" />
        <feDisplacementMap in="SourceGraphic" scale="50" xChannelSelector="R" yChannelSelector="G" />
      </filter>
      <filter id="soft" x="-50%" y="-50%" width="200%" height="200%"><feGaussianBlur stdDeviation="20" /></filter>
      <filter id="shoal" x="-50%" y="-50%" width="200%" height="200%"><feGaussianBlur stdDeviation="7" /></filter>
      <clipPath id="land">
        <path d={west.america + west.islands + west.european} />
        <path transform="translate(1200 0)" d={east.africa} />
        <path transform="translate(1200 0)" d={east.eurasia + east.australia + east.islands} />
      </clipPath>
    </defs>
    <rect x="0" y="60" width="2420" height="1180" fill="#4f618f" />
    <g filter="url(#ragged)" fill="#cfe1f5">
      <path d={iceWest} />
      <path transform="translate(1200 0)" d={iceEast} />
    </g>
    <rect x="0" y="80" width="2420" height="60" fill="#cfe1f5" />
    <g filter="url(#shoal)" fill="#2f7fae" opacity="0.7">
      {shoals.map(([x, y, rx, ry]) => <ellipse key={x} cx={x} cy={y} rx={rx} ry={ry} />)}
    </g>
    <g filter="url(#coast)">
      <Land fill="#869f69" />
      <g clipPath="url(#land)">
        <g filter="url(#soft)">
          {[...greens, ...tints].map(([x, y, rx, ry, c], i) => <ellipse key={i} cx={x} cy={y} rx={rx} ry={ry} fill={c} />)}
        </g>
      </g>
      <g fill="#e6ecd2">
        <path d="M420 170L540 158 660 154 680 162 640 176 600 188 560 184 520 200 470 190zM450 225L500 228 490 250 460 245zM560 232L610 246 660 272 676 288 640 282 600 262z" />
        <path d="M1272 182L1390 174 1360 184 1310 200zM1612 244L1640 222 1700 206 1740 198 1680 212zM1930 172L1960 168 2010 184 2030 190 1980 186zM1228 325L1290 288 1240 330z" />
        <path d="M588 1215L602 1130 608 1060 614 1130 604 1215zM24 325L80 340 130 370 170 410 120 384 70 356z" opacity="0.8" />
        <path d="M1820 580L1880 600 1960 606 1900 612 1840 600z" opacity="0.500" />
      </g>
      <path d="M190 204L260 198 300 210 220 214z" fill="#b7ab79" />
      <path d={greenland} fill="#effae6" />
      <path d="M770 262L786 310 768 290 755 262 735 240zM1000 215L960 250 950 240z" fill="#a5a889" />
    </g>
    <g fill="#50628f" filter="url(#coast)">
      <path d="M1415 484L1430 452 1448 462 1470 462 1520 486 1500 492 1450 490zM1570 465L1606 450 1600 475 1612 500 1618 522 1590 520 1586 490zM460 435L505 430 500 445 480 450 475 485 465 480 468 450zM505 465L560 452 520 470zM320 330L335 345 325 350zM525 315L540 330 545 360 535 355zM2062 400L2076 375 2070 390z" />
      <path d="M1572 465L1606 450 1600 462 1575 474z" fill="#2e8ba8" />
      <ellipse cx="1450" cy="832" rx="12" ry="9" fill="#4a93a3" />
      <ellipse cx="525" cy="390" rx="14" ry="20" fill="#4c86a8" />
    </g>
    <g fill="none" stroke="#5c6a45" strokeWidth="2" opacity="0.500" filter="url(#coast)">
      <path d={borders} />
      <path transform="translate(1200 0)" d={bordersEast} />
    </g>
    <g stroke="#9c9ea4" strokeWidth="3">
      {[-120, -90, -60, -30, 0, 30, 60, 90, 120].map(l => <path key={l} d={`M${mapX(l)} 60V1240`} />)}
      {[60, 30, 0, -30].map(l => <path key={l} d={`M0 ${mapY(l)}H2420`} strokeOpacity="0.700" />)}
    </g>
    <g fill="none" stroke="#e6e052" strokeWidth="4" strokeOpacity="0.450">
      {satellites.map((s, i) => <path key={i} d={footprint(s)} />)}
    </g>
    <g stroke="#f01a12" strokeWidth="3.500">
      {[9, 10, 26, 11, 18].map(n => (
        <path key={n} d={`M1180 417L${mapX(satellites[n - 1][0])} ${mapY(satellites[n - 1][1])}`} />
      ))}
    </g>
    {satellites.map(([lon, lat], i) => <Satellite key={i} x={mapX(lon)} y={mapY(lat)} />)}
    <g>
      <path d="M1170 435L1172 418 1192 432z" fill="#2a2a2a" />
      <ellipse cx="1179" cy="418" rx="17" ry="8" transform="rotate(45 1179 418)" fill="#fff" stroke="#222" strokeWidth="3" />
    </g>
  </Plot>
);

/* ---------- page ---------- */

const menus = ['File', 'Edit', 'View', 'Simulation', 'Model', 'Output', 'Propagation', 'Terrain', 'Results', 'Tools', 'Window', 'Help'];

const editing = ['Select', 'Pick', 'Area', 'Zoom in', 'Zoom out', 'Note'];
const linking = ['Add link', 'Split A', 'Split B', 'Station A', 'Station B', 'Station C', 'Station D'];

export default function App() {
  return (
    <Shell>
      <Global />
      <AppBar>
        <svg width="14" height="14" viewBox="0 0 14 14" aria-hidden="true">
          <path d="M0 12C0 3 3 0 7 0s7 3 7 12z" fill="#f4f8fc" />
          <path d="M1 3l3 6 3-8 1 5 4-4" fill="none" stroke="#2fa3dd" strokeWidth="1.500" />
          <path d="M0 10h5v3H0z" fill="#d8343c" />
          <path d="M8 12V7h2.500q1.500 1.500 0 3H8" fill="none" stroke="#234a86" strokeWidth="1.500" />
        </svg>
        <AppTitle>Visualyse (x64) V7.10.7.4 - Calculate GDOP example.SIM</AppTitle>
        <SearchBox>
          <Svg><circle cx="10" cy="6" r="4.700" stroke="#c6d2e6" /><path d="M7 9.500L1 15" stroke="#c6d2e6" strokeWidth="1.800" /></Svg>
          <SearchInput aria-label="Search" placeholder="Search (Ctrl+Q)" />
        </SearchBox>
        <ControlButton type="button" aria-label="Notifications" $w={34}>
          <Svg><path d="M3 12V7q0-5 5-5t5 5v5l1 1H2zM7 14.500h2" /></Svg>
        </ControlButton>
        <Controls w={37} />
      </AppBar>
      <MenuBar>
        <MenuGrip $w={4} />
        {menus.map(m => <MenuItem key={m} type="button">{m}</MenuItem>)}
      </MenuBar>
      <Bars>
        <Bar>
          <Grip $w={5} />
          <Tools w={74} names={['New', 'Open', 'Save', 'Save as']} />
          <Separator />
          <Tools w={18} names={['Copy']} />
          <Separator />
          <Tools w={165} names={['Plan', 'Mercator', 'Globe', 'Network', 'Watch', 'Terrain', 'Table', 'Wave', 'Tools']} />
          <Separator />
          <Tools w={110} names={editing} off={editing} />
          <Separator />
          <Tools w={129} names={['Clock', 'Restart', 'Stop', 'Step', 'Play', 'Fast', 'Information']} off={['Step', 'Play', 'Fast']} />
        </Bar>
        <Bar>
          <Grip $w={4} />
          <Tools w={186} names={['Signal', 'Point', 'Cluster', 'Antenna', 'Link', 'Link group', 'Interference', 'Paths', 'Flow', 'Traffic']} />
          <svg width="10" height="10" viewBox="0 0 10 10" aria-hidden="true"><path d="M3 4h5L5.500 7z" fill="#777" /></svg>
          <Tools w={18} names={['Variable']} />
          <Separator />
          <Tools w={128} names={linking} off={linking} />
          <Separator />
          <Tools w={36} names={['Sum', 'Export']} />
          <Separator />
          <Tools w={111} names={['Report', 'Contours', 'Add area', 'Spectrum', 'Line', 'Histogram']} off={['Add area']} />
          <Separator />
          <Tools w={110} names={['Terrain data', 'Profile', 'Add path', 'Edit path', 'Add clutter', 'Clutter']} off={['Profile', 'Add path', 'Edit path', 'Add clutter']} />
        </Bar>
      </Bars>
      <Desktop>
        <ChildWindow n={4} icon="chart" active><Chart /></ChildWindow>
        <ChildWindow n={1} icon="watch"><Watches /></ChildWindow>
        <ChildWindow n={2} icon="table"><GroupTable /></ChildWindow>
        <ChildWindow n={3} icon="map"><WorldMap /></ChildWindow>
      </Desktop>
      <StatusBar>
        <StatusCell>Ready</StatusCell>
        <StatusCell $w={95}>Finished</StatusCell>
        <StatusCell $w={149}>Timestep = 1000</StatusCell>
        <StatusCell $w={22} $off>CAP</StatusCell>
        <StatusCell $w={28}>NUM</StatusCell>
        <svg width="8" height="8" viewBox="0 0 8 8" aria-hidden="true"><path d="M6 0h2v2H6zM3 3h2v2H3zM6 3h2v2H6zM0 6h2v2H0zM3 6h2v2H3zM6 6h2v2H6z" fill="#c4c4c4" /></svg>
      </StatusBar>
    </Shell>
  );
}
